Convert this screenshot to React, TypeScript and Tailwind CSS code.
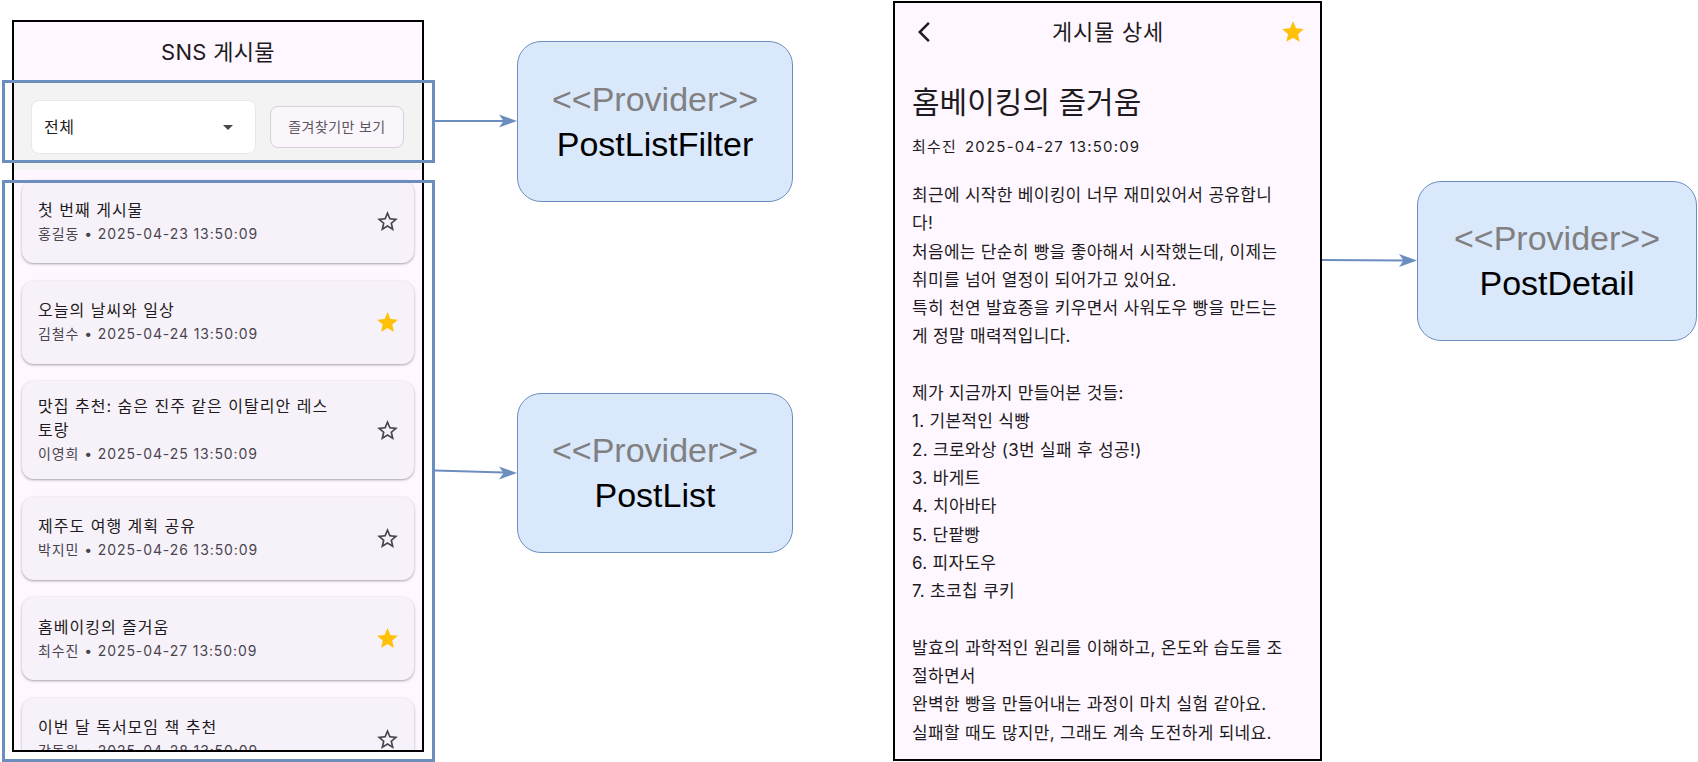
import type { ReactNode } from 'react'

const uiFont = 'font-[Inter,"Noto_Sans_CJK_KR",sans-serif]'

type Post = {
  id: number
  title: string
  author: string
  date: string
  favorite: boolean
}

const posts: Post[] = [
  { id: 1, title: '첫 번째 게시물', author: '홍길동', date: '2025-04-23 13:50:09', favorite: false },
  { id: 2, title: '오늘의 날씨와 일상', author: '김철수', date: '2025-04-24 13:50:09', favorite: true },
  { id: 3, title: '맛집 추천: 숨은 진주 같은 이탈리안 레스토랑', author: '이영희', date: '2025-04-25 13:50:09', favorite: false },
  { id: 4, title: '제주도 여행 계획 공유', author: '박지민', date: '2025-04-26 13:50:09', favorite: false },
  { id: 5, title: '홈베이킹의 즐거움', author: '최수진', date: '2025-04-27 13:50:09', favorite: true },
  { id: 6, title: '이번 달 독서모임 책 추천', author: '강동원', date: '2025-04-28 13:50:09', favorite: false },
]

// wrapped the same way the device wrapped it
const bodyLines = [
  '최근에 시작한 베이킹이 너무 재미있어서 공유합니',
  '다!',
  '처음에는 단순히 빵을 좋아해서 시작했는데, 이제는',
  '취미를 넘어 열정이 되어가고 있어요.',
  '특히 천연 발효종을 키우면서 사워도우 빵을 만드는',
  '게 정말 매력적입니다.',
  '',
  '제가 지금까지 만들어본 것들:',
  '1. 기본적인 식빵',
  '2. 크로와상 (3번 실패 후 성공!)',
  '3. 바게트',
  '4. 치아바타',
  '5. 단팥빵',
  '6. 피자도우',
  '7. 초코칩 쿠키',
  '',
  '발효의 과학적인 원리를 이해하고, 온도와 습도를 조',
  '절하면서',
  '완벽한 빵을 만들어내는 과정이 마치 실험 같아요.',
  '실패할 때도 많지만, 그래도 계속 도전하게 되네요.',
]

function StarIcon({ filled, className }: { filled: boolean; className?: string }) {
  return (
    <svg className={className} viewBox="0 0 24 24" fill={filled ? '#ffc107' : '#49454f'}>
      {filled ? (
        <path d="M12 17.27L18.18 21l-1.64-7.03L22 9.24l-7.19-.61L12 2 9.19 8.63 2 9.24l5.46 4.73L5.82 21z" />
      ) : (
        <path d="M22 9.24l-7.19-.62L12 2 9.19 8.63 2 9.24l5.46 4.73L5.82 21 12 17.27 18.18 21l-1.63-7.03L22 9.24zM12 15.4l-3.76 2.27 1-4.28-3.32-2.88 4.38-.38L12 6.1l1.71 4.04 4.38.38-3.32 2.88 1 4.28L12 15.4z" />
      )}
    </svg>
  )
}

function PostCard({ post }: { post: Post }) {
  return (
    <div className="flex min-h-[83px] shrink-0 items-center justify-between rounded-xl bg-[#f7f2fa] py-[13px] pl-4 pr-[14px] shadow-[0_1px_2px_rgba(0,0,0,0.25),0_1px_3px_1px_rgba(0,0,0,0.08)]">
      <div className="w-[298px]">
        <p className="text-[16px] leading-6 tracking-[1px] text-[#1d1b20]">{post.title}</p>
        <p className="text-[14px] leading-6 tracking-[0.9px] text-[#49454f]">
          {post.author} • {post.date}
        </p>
      </div>
      <StarIcon className="h-[25px] w-[25px] shrink-0" filled={post.favorite} />
    </div>
  )
}

function PostListScreen() {
  return (
    <div className={`absolute left-[12px] top-[20px] flex h-[732px] w-[412px] flex-col overflow-hidden border-2 border-black bg-[#fef7ff] ${uiFont}`}>
      <header className="flex h-[61px] shrink-0 items-center justify-center text-[22px] tracking-[0.3px] text-[#1d1b20]">
        SNS 게시물
      </header>

      <div className="flex h-[87px] shrink-0 items-center gap-[14px] bg-[#f3f3f3] pl-[17px] pr-[18px]">
        <div className="flex h-[54px] w-[225px] items-center justify-between rounded-lg border border-[#ebe6ec] bg-white pl-3 pr-[15px]">
          <span className="text-[16px] tracking-[0.5px] text-[#1d1b20]">전체</span>
          <svg className="h-6 w-6" viewBox="0 0 24 24" fill="#49454f">
            <path d="M7 10l5 5 5-5z" />
          </svg>
        </div>
        <button className="flex h-[42px] w-[134px] items-center justify-center rounded-lg border border-[#d6d0da] bg-[#fbf6fc] text-[14px] tracking-[0.4px] text-[#5b5660]">
          즐겨찾기만 보기
        </button>
      </div>

      <div className="flex flex-col gap-[17.5px] px-2 pt-[10px]">
        {posts.map((post) => (
          <PostCard key={post.id} post={post} />
        ))}
      </div>
    </div>
  )
}

function PostDetailScreen() {
  return (
    <div className={`absolute left-[893px] top-[1px] flex h-[760px] w-[429px] flex-col overflow-hidden border-2 border-black bg-[#fef7ff] ${uiFont}`}>
      <header className="flex h-[58px] shrink-0 items-center pl-[17px] pr-[14px]">
        <svg className="h-6 w-6" viewBox="0 0 24 24" fill="#1d1b20">
          <path d="M17.77 3.77 16 2 6 12l10 10 1.77-1.77L9.54 12z" />
        </svg>
        <h1 className="flex-1 text-center text-[22px] tracking-[0.8px] text-[#1d1b20]">게시물 상세</h1>
        <StarIcon className="h-[26px] w-[26px]" filled />
      </header>

      <div className="pl-[17px] pr-4 pt-[21px] text-[#1d1b20]">
        <h2 className="text-[30px] leading-[40px]">홈베이킹의 즐거움</h2>
        <p className="mt-[15px] flex gap-2 text-[15px] leading-5 tracking-[1.2px] text-[#1d1b20]">
          <span>최수진</span>
          <span>2025-04-27 13:50:09</span>
        </p>
        <div className="mt-[24px] text-[17px] leading-[28.3px] tracking-[0.3px]">
          {bodyLines.map((line, i) => (
            <p className="h-[28.3px] whitespace-nowrap" key={i}>
              {line}
            </p>
          ))}
        </div>
      </div>
    </div>
  )
}

function ProviderBox({ name, className }: { name: string; className: string }) {
  return (
    <div
      className={`absolute flex flex-col items-center justify-center rounded-[24px] border-[1.5px] border-[#6c8ebf] bg-[#dae8fc] font-['Liberation_Sans',Arial,sans-serif] text-[34px] leading-[45px] ${className}`}
    >
      <span className="text-[#808080]">&lt;&lt;Provider&gt;&gt;</span>
      <span className="text-black">{name}</span>
    </div>
  )
}

function Highlight({ className }: { className: string }) {
  return <div className={`pointer-events-none absolute border-[3px] border-[#6c8ebf] ${className}`} />
}

function Connectors(): ReactNode {
  const head = (x: number, y: number) => `M${x} ${y} L${x - 18} ${y - 6.5} L${x - 13.5} ${y} L${x - 18} ${y + 6.5} Z`
  return (
    <svg className="pointer-events-none absolute inset-0" width="1698" height="762">
      <g stroke="#6c8ebf" strokeWidth="2" fill="none">
        <path d="M435 121 L504 121" />
        <path d="M435 470.5 L504 472.6" />
        <path d="M1322 260 L1404 260.5" />
      </g>
      <g fill="#6c8ebf">
        <path d={head(517, 121)} />
        <path d={head(517, 473)} />
        <path d={head(1417, 260.5)} />
      </g>
    </svg>
  )
}

export default function App() {
  return (
    <div className="relative h-[762px] w-[1698px] overflow-hidden bg-white">
      <PostListScreen />
      <PostDetailScreen />

      <Highlight className="left-[2px] top-[80px] h-[83px] w-[433px]" />
      <Highlight className="left-[2px] top-[180px] h-[582px] w-[433px]" />

      <ProviderBox className="left-[517px] top-[41px] h-[161px] w-[276px]" name="PostListFilter" />
      <ProviderBox className="left-[517px] top-[393px] h-[160px] w-[276px]" name="PostList" />
      <ProviderBox className="left-[1417px] top-[181px] h-[160px] w-[280px]" name="PostDetail" />

      <Connectors />
    </div>
  )
}
